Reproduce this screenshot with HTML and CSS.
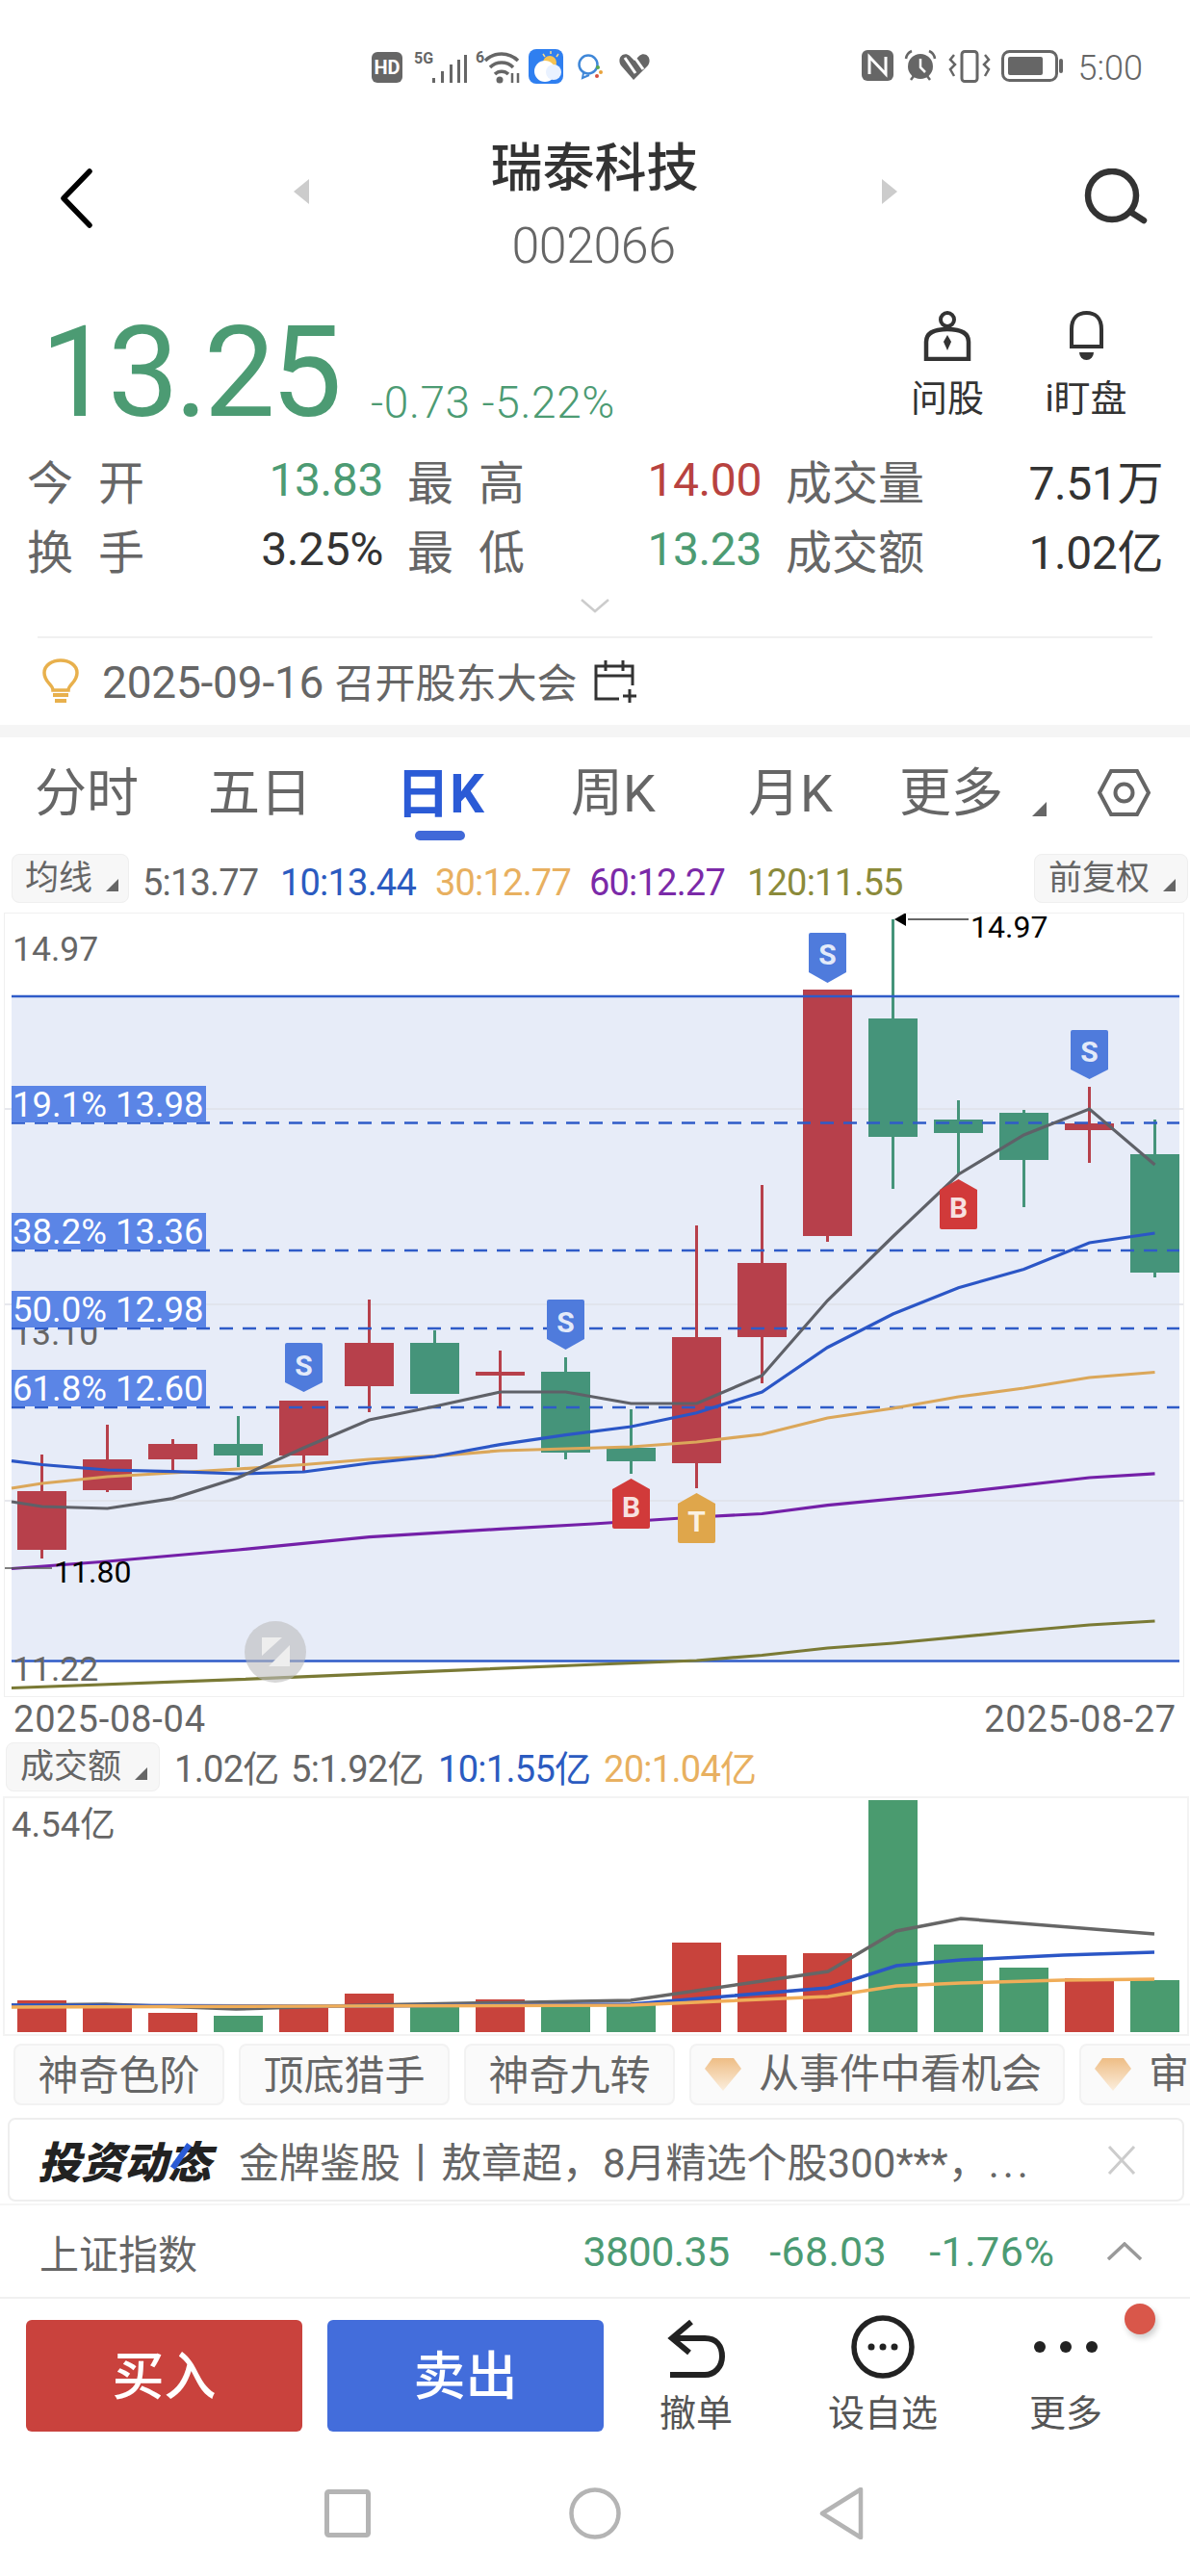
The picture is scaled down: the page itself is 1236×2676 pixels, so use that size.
FILE: index.html
```html
<!DOCTYPE html>
<html>
<head>
    <title>瑞泰科技</title>
    <link rel="stylesheet" href="styles.css">
</head>
<body>
    <!-- status bar -->
    <div class="status">
        <svg width="290" height="38" viewBox="386 51 290 38">
            <rect x="386" y="54" width="32" height="32" rx="6" fill="#666"/>
            <text x="402" y="77" class="st-hd">HD</text>
            <text x="430" y="66" class="st-small">5G</text>
            <rect x="449" y="81" width="3" height="5" fill="#666"/>
            <rect x="458" y="74" width="3" height="12" fill="#666"/>
            <rect x="467" y="67" width="3" height="19" fill="#666"/>
            <rect x="475" y="62" width="3" height="24" fill="#666"/>
            <rect x="482" y="57" width="3" height="29" fill="#666"/>
            <text x="494" y="65" class="st-small">6</text>
            <g fill="none" stroke="#666" stroke-width="3.5">
                <path d="M504 63 A24 24 0 0 1 538 63"/>
                <path d="M509 70 A17 17 0 0 1 533 70"/>
                <path d="M514 77 A10 10 0 0 1 528 77"/>
            </g>
            <circle cx="519" cy="83" r="3.5" fill="#666"/>
            <path d="M532 86 V76 M538 86 V76" stroke="#666" stroke-width="2.5"/>
            <rect x="549" y="51" width="36" height="36" rx="8" fill="#2f7ff0"/>
            <path d="M572 53 V56 M564 56 L566 59 M580 56 L578 59" stroke="#f6d98a" stroke-width="1.5"/>
            <circle cx="571" cy="65" r="7" fill="#f6c453"/>
            <circle cx="566" cy="74" r="11" fill="#fff"/>
            <circle cx="575" cy="75" r="8" fill="#eaf2ff"/>
            <circle cx="611" cy="67" r="9.5" fill="none" stroke="#3f87d8" stroke-width="2.5"/>
            <path d="M606 76 L605 81 L612 78" fill="none" stroke="#3f87d8" stroke-width="2"/>
            <circle cx="621" cy="70" r="2" fill="#5aa84e"/>
            <circle cx="624" cy="75" r="2" fill="#e8a23c"/>
            <circle cx="620" cy="79" r="2" fill="#d6503f"/>
            <path d="M658 83 L645 68 C640 60 648 53 654 58 L659 63 L664 58 C670 53 678 60 673 68 Z" fill="#666"/>
            <path d="M649 60 L660 76 M658 58 L668 72" stroke="#fff" stroke-width="3"/>
        </svg>
        <div class="status-right">
            <svg width="210" height="36" viewBox="896 52 210 36">
                <rect x="896" y="53" width="33" height="32" rx="6" fill="#666"/>
                <path d="M904 78 V60 L921 78 V60" fill="none" stroke="#fff" stroke-width="3"/>
                <circle cx="957" cy="70" r="13" fill="#666"/>
                <path d="M957 62 V71 L962 76" fill="none" stroke="#fff" stroke-width="2.5"/>
                <path d="M942 62 A10 10 0 0 1 948 54 M972 62 A10 10 0 0 0 966 54 M947 84 L950 80 M967 84 L964 80" fill="none" stroke="#666" stroke-width="2.5"/>
                <rect x="1000" y="54.5" width="16" height="31" rx="3" fill="none" stroke="#666" stroke-width="3"/>
                <path d="M992 58 L988 63 L993 68 L988 73 L992 80 M1024 58 L1028 63 L1023 68 L1028 73 L1024 80" fill="none" stroke="#666" stroke-width="2.5"/>
                <rect x="1042.5" y="54.5" width="56" height="30" rx="7" fill="none" stroke="#666" stroke-width="3"/>
                <rect x="1048" y="60" width="36" height="19" rx="2" fill="#666"/>
                <rect x="1101" y="62" width="4" height="15" rx="2" fill="#666"/>
            </svg>
            <span class="status-time">5:00</span>
        </div>
    </div>

    <!-- title bar -->
    <div class="titlebar">
        <svg class="back" width="34" height="62" viewBox="0 0 34 62">
            <path d="M31 3 L4 31 L31 59" fill="none" stroke="#000" stroke-width="5.5" stroke-linecap="round" stroke-linejoin="round"/>
        </svg>
        <svg class="arrow-l" width="16" height="26" viewBox="0 0 16 26"><path d="M16 0 V26 L0 13 Z" fill="#ccc"/></svg>
        <div class="stock-name">
            <p class="name">瑞泰科技</p>
            <p class="code">002066</p>
        </div>
        <svg class="arrow-r" width="16" height="26" viewBox="0 0 16 26"><path d="M0 0 V26 L16 13 Z" fill="#ccc"/></svg>
        <svg class="search" width="66" height="58" viewBox="0 0 66 58">
            <circle cx="29" cy="28" r="25" fill="none" stroke="#333" stroke-width="6.5"/>
            <path d="M48 45 L62 54" stroke="#333" stroke-width="6.5" stroke-linecap="round"/>
        </svg>
    </div>

    <!-- current price -->
    <div class="quote">
        <span class="price">13.25</span>
        <span class="change">-0.73 -5.22%</span>
        <div class="quick one">
            <svg width="50" height="52" viewBox="0 0 50 52">
                <circle cx="25" cy="9" r="7" fill="none" stroke="#333" stroke-width="4"/>
                <path d="M3 50 V32 C3 22 12 19 25 19 C38 19 47 22 47 32 V50 Z" fill="none" stroke="#333" stroke-width="4.5"/>
                <path d="M25 25 L29 32 L25 41 L21 32 Z" fill="#333"/>
            </svg>
            <span>问股</span>
        </div>
        <div class="quick two">
            <svg width="39" height="52" viewBox="0 0 39 52">
                <path d="M4 37 V19 C4 7 11 2 19.5 2 C28 2 35 7 35 19 V37 Z" fill="none" stroke="#333" stroke-width="4"/>
                <path d="M12 43 H27 A7.5 8 0 0 1 12 43 Z" fill="#333"/>
            </svg>
            <span>i盯盘</span>
        </div>
    </div>

    <!-- open, high, low and so on -->
    <div class="stats">
        <div class="lbl"><span>今</span><span>开</span></div><div class="val green">13.83</div>
        <div class="lbl mid"><span>最</span><span>高</span></div><div class="val red">14.00</div>
        <div class="lbl mid"><span>成交量</span></div><div class="val">7.51万</div>
        <div class="lbl"><span>换</span><span>手</span></div><div class="val">3.25%</div>
        <div class="lbl mid"><span>最</span><span>低</span></div><div class="val green">13.23</div>
        <div class="lbl mid"><span>成交额</span></div><div class="val">1.02亿</div>
    </div>
    <div class="expand">
        <svg width="30" height="15" viewBox="0 0 30 15"><path d="M1 1 L15 13 L29 1" fill="none" stroke="#ccc" stroke-width="2.5"/></svg>
    </div>
    <div class="rule"></div>

    <!-- event notice -->
    <div class="event">
        <svg width="40" height="48" viewBox="0 0 40 48">
            <path d="M12 33 C12 27 3 25 3 15 C3 7 11 2 20 2 C29 2 37 7 37 15 C37 25 28 27 28 33 Z" fill="none" stroke="#e8b04c" stroke-width="3.5"/>
            <path d="M12 38 H28 M14 44 H26" stroke="#e8b04c" stroke-width="4"/>
        </svg>
        <span class="event-text">2025-09-16 <span class="event-cn">召开股东大会</span></span>
        <svg class="event-cal" width="46" height="44" viewBox="0 0 46 44">
            <path d="M26 40 H2 V6 H40 V26 M2 16 H40 M12 0 V11 M30 0 V11 M37 30 V44 M30 37 H44" fill="none" stroke="#333" stroke-width="3"/>
        </svg>
    </div>
    <div class="band"></div>

    <!-- period tabs -->
    <div class="tabs">
        <div class="tab">分时</div>
        <div class="tab">五日</div>
        <div class="tab active">日K<div class="tab-line"></div></div>
        <div class="tab">周K</div>
        <div class="tab">月K</div>
        <div class="tab">更多</div>
        <div class="tab-tools">
            <svg width="15" height="15" viewBox="0 0 15 15"><path d="M15 0 V15 H0 Z" fill="#666"/></svg>
            <svg width="55" height="49" viewBox="0 0 55 49">
                <path d="M14 2 H41 L53 24.5 L41 47 H14 L2 24.5 Z" fill="none" stroke="#666" stroke-width="4"/>
                <circle cx="27.5" cy="24.5" r="9" fill="none" stroke="#666" stroke-width="4"/>
            </svg>
        </div>
    </div>

    <!-- moving average legend -->
    <div class="legend">
        <div class="pick ma-pick">均线<i class="tri"></i></div>
        <span class="ma5">5:13.77</span>
        <span class="ma10">10:13.44</span>
        <span class="ma30">30:12.77</span>
        <span class="ma60">60:12.27</span>
        <span class="ma120">120:11.55</span>
        <div class="pick adj-pick">前复权<i class="tri"></i></div>
    </div>

    <!-- k line chart, drawn in page coordinates -->
    <div class="kchart">
        <svg width="1224" height="813" viewBox="5 949 1224 813">
            <rect x="12" y="1035" width="1213" height="690" fill="#e7ecf8"/>
            <path d="M5 1152 H1229 M5 1355 H1229 M5 1559 H1229" stroke="#dfe1e8" stroke-width="1.5"/>
            <text x="13" y="998" class="axis">14.97</text>
            <text x="13" y="1397" class="axis">13.10</text>

            <g class="up">
                <rect x="18" y="1549" width="51" height="61"/><rect x="42" y="1511" width="3" height="108"/>
                <rect x="86" y="1516" width="51" height="32"/><rect x="110" y="1480" width="3" height="70"/>
                <rect x="154" y="1500" width="51" height="16"/><rect x="178" y="1495" width="3" height="33"/>
                <rect x="290" y="1455" width="51" height="57"/><rect x="314" y="1455" width="3" height="73"/>
                <rect x="358" y="1395" width="51" height="45"/><rect x="382" y="1350" width="3" height="117"/>
                <rect x="494" y="1425" width="51" height="4"/><rect x="518" y="1403" width="3" height="58"/>
                <rect x="698" y="1389" width="51" height="131"/><rect x="722" y="1273" width="3" height="273"/>
                <rect x="766" y="1312" width="51" height="77"/><rect x="790" y="1231" width="3" height="206"/>
                <rect x="834" y="1028" width="51" height="256"/><rect x="858" y="1028" width="3" height="262"/>
                <rect x="1106" y="1167" width="51" height="7"/><rect x="1130" y="1129" width="3" height="79"/>
            </g>
            <g class="down">
                <rect x="222" y="1500" width="51" height="12"/><rect x="246" y="1471" width="3" height="53"/>
                <rect x="426" y="1395" width="51" height="53"/><rect x="450" y="1382" width="3" height="66"/>
                <rect x="562" y="1425" width="51" height="84"/><rect x="586" y="1410" width="3" height="106"/>
                <rect x="630" y="1504" width="51" height="14"/><rect x="654" y="1464" width="3" height="67"/>
                <rect x="902" y="1058" width="51" height="123"/><rect x="926" y="955" width="3" height="280"/>
                <rect x="970" y="1163" width="51" height="14"/><rect x="994" y="1143" width="3" height="77"/>
                <rect x="1038" y="1156" width="51" height="49"/><rect x="1062" y="1153" width="3" height="101"/>
                <rect x="1174" y="1199" width="51" height="123"/><rect x="1198" y="1163" width="3" height="164"/>
            </g>

            <path d="M12 1035 H1225 M12 1725.5 H1225" stroke="#2f5bc8" stroke-width="2.5"/>
            <path class="dash" d="M12 1166.5 H1225 M12 1299 H1225 M12 1380 H1225 M12 1462 H1225"/>

            <g fill="none" stroke-width="3.2">
                <polyline stroke="#7a7a35" points="12,1753.5 247.5,1744.7 620,1729 723.5,1725 791.5,1719.5 859.5,1712 927.5,1707 1063.5,1694 1131.5,1688 1199.5,1684"/>
                <polyline stroke="#7420a8" points="12,1629.5 111.5,1622 247.5,1610 383.5,1596.6 519.5,1588.4 616,1583 723.5,1576 791.5,1572.5 859.5,1563.7 995.5,1550.5 1131.5,1535 1199.5,1530.8"/>
                <polyline stroke="#dba75a" points="12,1546 43.5,1541 111.5,1534 179.5,1530 247.5,1526 315.5,1521.5 383.5,1516 451.5,1512.7 519.5,1507 587.5,1505 655.5,1503 723.5,1498 791.5,1490 859.5,1473 927.5,1463 995.5,1451 1063.5,1442 1131.5,1431 1199.5,1425.5"/>
                <polyline stroke="#2b56c6" points="12,1517.6 43.5,1521.5 111.5,1527 179.5,1528.6 247.5,1531 315.5,1529 383.5,1520 451.5,1513 519.5,1500.6 587.5,1490.7 655.5,1482 723.5,1467.7 791.5,1446 859.5,1399.7 927.5,1365 995.5,1337.7 1063.5,1318.5 1131.5,1291 1199.5,1281"/>
                <polyline stroke="#5f6168" points="12,1560 43.5,1565 111.5,1567 179.5,1556.6 247.5,1535 315.5,1504 383.5,1475 451.5,1461 519.5,1446 587.5,1446 655.5,1458 723.5,1458 791.5,1429 859.5,1351 927.5,1284.5 995.5,1220 1063.5,1179 1131.5,1152 1199.5,1210"/>
            </g>

            <g class="fib">
                <rect x="12" y="1128" width="202" height="38"/><text x="13" y="1160">19.1% 13.98</text>
                <rect x="12" y="1260" width="202" height="38"/><text x="13" y="1292">38.2% 13.36</text>
                <rect x="12" y="1341" width="202" height="38"/><text x="13" y="1373">50.0% 12.98</text>
                <rect x="12" y="1423" width="202" height="38"/><text x="13" y="1455">61.8% 12.60</text>
            </g>

            <g class="mark-s">
                <path d="M298 1395 H333 Q335 1395 335 1397 V1436 L315.5 1446 L296 1436 V1397 Q296 1395 298 1395 Z"/><text x="315.5" y="1429">S</text>
                <path d="M570 1350 H605 Q607 1350 607 1352 V1391 L587.5 1402 L568 1391 V1352 Q568 1350 570 1350 Z"/><text x="587.5" y="1384">S</text>
                <path d="M842 969 H877 Q879 969 879 971 V1010 L859.5 1021 L840 1010 V971 Q840 969 842 969 Z"/><text x="859.5" y="1002">S</text>
                <path d="M1114 1070 H1149 Q1151 1070 1151 1072 V1111 L1131.5 1121 L1112 1111 V1072 Q1112 1070 1114 1070 Z"/><text x="1131.5" y="1103">S</text>
            </g>
            <g class="mark-b">
                <path d="M638 1588 H673 Q675 1588 675 1586 V1547 L655.5 1536 L636 1547 V1586 Q636 1588 638 1588 Z"/><text x="655.5" y="1576">B</text>
                <path d="M978 1277 H1013 Q1015 1277 1015 1275 V1236 L995.5 1225 L976 1236 V1275 Q976 1277 978 1277 Z"/><text x="995.5" y="1265">B</text>
            </g>
            <g class="mark-t">
                <path d="M706 1603 H741 Q743 1603 743 1601 V1562 L723.5 1551 L704 1562 V1601 Q704 1603 706 1603 Z"/><text x="723.5" y="1591">T</text>
            </g>

            <path d="M943 955 H1006" stroke="#333" stroke-width="1.5"/>
            <path d="M929 955 L941 948 V962 Z" fill="#000"/>
            <text x="1008" y="974" class="peak">14.97</text>
            <path d="M5 1629 H54" stroke="#555" stroke-width="1.5"/>
            <text x="56" y="1644" class="peak">11.80</text>
            <text x="13" y="1746" class="axis">11.22</text>

            <circle cx="286" cy="1716" r="32" fill="#bdbdbd" fill-opacity="0.6"/>
            <path d="M272 1701 H293 L272 1720 Z M301 1709 V1731 H279 Z" fill="#eee"/>
        </svg>
    </div>
    <div class="dates"><span>2025-08-04</span><span>2025-08-27</span></div>

    <!-- volume -->
    <div class="vol-legend">
        <div class="pick vol-pick">成交额<i class="tri"></i></div>
        <span class="v1">1.02亿</span>
        <span class="v5">5:1.92亿</span>
        <span class="v10">10:1.55亿</span>
        <span class="v20">20:1.04亿</span>
    </div>
    <div class="volchart">
        <svg width="1228" height="245" viewBox="5 1868 1228 245">
            <g class="vup">
                <rect x="18" y="2078" width="51" height="33"/>
                <rect x="86" y="2083" width="51" height="28"/>
                <rect x="154" y="2091" width="51" height="20"/>
                <rect x="290" y="2085" width="51" height="26"/>
                <rect x="358" y="2071" width="51" height="40"/>
                <rect x="494" y="2077" width="51" height="34"/>
                <rect x="698" y="2018" width="51" height="93"/>
                <rect x="766" y="2031" width="51" height="80"/>
                <rect x="834" y="2029" width="51" height="82"/>
                <rect x="1106" y="2055" width="51" height="56"/>
            </g>
            <g class="vdown">
                <rect x="222" y="2094" width="51" height="17"/>
                <rect x="426" y="2085" width="51" height="26"/>
                <rect x="562" y="2083" width="51" height="28"/>
                <rect x="630" y="2083" width="51" height="28"/>
                <rect x="902" y="1870" width="51" height="241"/>
                <rect x="970" y="2020" width="51" height="91"/>
                <rect x="1038" y="2044" width="51" height="67"/>
                <rect x="1174" y="2057" width="51" height="54"/>
            </g>
            <g fill="none" stroke-width="3.5">
                <polyline stroke="#666" points="12,2083 110,2082 245,2087 378,2083 655,2078 860,2048 931,2006 998,1993 1199,2009"/>
                <polyline stroke="#2b56c6" points="12,2083 378,2084 655,2082 860,2065 931,2042 998,2036 1104,2031 1199,2028"/>
                <polyline stroke="#f0ad58" points="12,2085 655,2083 860,2074 931,2063 998,2060 1104,2057 1199,2056"/>
            </g>
            <text x="12" y="1908" class="vol-max">4.54亿</text>
        </svg>
    </div>

    <!-- tool chips -->
    <div class="chips">
        <div class="chip">神奇色阶</div>
        <div class="chip">顶底猎手</div>
        <div class="chip">神奇九转</div>
        <div class="chip chip-wide">
            <svg width="38" height="34" viewBox="0 0 38 34"><defs><linearGradient id="gem" x1="0" y1="0" x2="0" y2="1"><stop offset="0" stop-color="#eebd85"/><stop offset="1" stop-color="#fbeedd"/></linearGradient></defs><path d="M8 0 H30 L38 11 L19 34 L0 11 Z" fill="url(#gem)"/></svg>
            从事件中看机会
        </div>
        <div class="chip chip-wide">
            <svg width="38" height="34" viewBox="0 0 38 34"><path d="M8 0 H30 L38 11 L19 34 L0 11 Z" fill="url(#gem)"/></svg>
            审时度势
        </div>
    </div>

    <!-- news -->
    <div class="news">
        <span class="news-logo">投资动态</span>
        <span class="news-text">金牌鉴股丨敖章超，8月精选个股300***，<span class="news-more">...</span></span>
        <svg width="30" height="30" viewBox="0 0 30 30"><path d="M2 1 L28 29 M28 1 L2 29" stroke="#ccc" stroke-width="3"/></svg>
    </div>

    <!-- index -->
    <div class="index">
        <span class="index-name">上证指数</span>
        <span class="index-val">3800.35</span>
        <span class="index-chg">-68.03</span>
        <span class="index-pct">-1.76%</span>
        <svg width="38" height="19" viewBox="0 0 38 19"><path d="M2 18 L19 2 L36 18" fill="none" stroke="#999" stroke-width="3.5"/></svg>
    </div>

    <!-- bottom actions -->
    <div class="actions">
        <a class="btn buy" href="#">买入</a>
        <a class="btn sell" href="#">卖出</a>
        <div class="act act-undo">
            <svg width="62" height="62" viewBox="0 0 62 62">
                <path d="M26 3 L6 20 L24 35 M6 20 H40 C52 20 58 28 58 39 C58 50 50 58 40 58 H4" fill="none" stroke="#222" stroke-width="6"/>
            </svg>
            <span>撤单</span>
        </div>
        <div class="act act-watch">
            <svg width="66" height="66" viewBox="0 0 66 66">
                <circle cx="33" cy="33" r="30" fill="none" stroke="#222" stroke-width="5.5"/>
                <circle cx="21" cy="33" r="3.5" fill="#222"/><circle cx="33" cy="33" r="3.5" fill="#222"/><circle cx="45" cy="33" r="3.5" fill="#222"/>
            </svg>
            <span>设自选</span>
        </div>
        <div class="act act-more">
            <svg width="66" height="66" viewBox="0 0 66 66">
                <circle cx="6" cy="33" r="6" fill="#222"/><circle cx="33" cy="33" r="6" fill="#222"/><circle cx="60" cy="33" r="6" fill="#222"/>
            </svg>
            <span>更多</span>
            <i class="dot"></i>
        </div>
    </div>

    <!-- system nav -->
    <div class="nav">
        <svg width="48" height="50" viewBox="0 0 48 50"><rect x="2.5" y="2.5" width="43" height="45" rx="2" fill="none" stroke="#b4b4b4" stroke-width="5"/></svg>
        <svg width="54" height="54" viewBox="0 0 54 54"><circle cx="27" cy="27" r="24.5" fill="none" stroke="#b4b4b4" stroke-width="4.5"/></svg>
        <svg width="46" height="54" viewBox="0 0 46 54"><path d="M43 2 V52 L3 27 Z" fill="none" stroke="#b4b4b4" stroke-width="4.5" stroke-linejoin="round"/></svg>
    </div>
</body>
</html>
```

FILE: styles.css
```css
/* page */
body {
    margin: 0;
    width: 1236px;
    height: 2676px;
    overflow: hidden;
    background: #fff;
    color: #666;
    font-family: Roboto, "Noto Sans CJK SC", sans-serif;
}
p {
    margin: 0;
}
svg {
    display: block;
    flex: none;
}

/* status bar */
.status {
    height: 110px;
    box-sizing: border-box;
    padding: 51px 49px 0 386px;
    display: flex;
    justify-content: space-between;
}
.status-right {
    display: flex;
    align-items: flex-start;
}
.status-time {
    font-size: 36px;
    line-height: 36px;
    margin: 2px 0 0 15px;
    font-weight: 300;
}
.st-hd {
    fill: #fff;
    font-size: 20px;
    font-weight: 700;
    text-anchor: middle;
}
.st-small {
    fill: #666;
    font-size: 16px;
    font-weight: 700;
}

/* title bar */
.titlebar {
    height: 180px;
    display: flex;
    align-items: flex-start;
    padding-left: 62px;
}
.back {
    margin: 65px 209px 0 0;
}
.arrow-l,
.arrow-r {
    margin-top: 76px;
}
.stock-name {
    width: 595px;
    text-align: center;
    padding-top: 31px;
}
.name {
    font-size: 54px;
    line-height: 70px;
    color: #333;
    font-weight: 500;
    margin-right: 2px;
}
.code {
    font-size: 52px;
    line-height: 60px;
    margin: 15px 4px 0 0;
    font-weight: 300;
    letter-spacing: -0.5px;
}
.search {
    margin: 65px 0 0 194px;
}

/* price */
.quote {
    height: 174px;
    display: flex;
    align-items: flex-start;
    padding-left: 42px;
    color: #4c9b73;
}
.price {
    font-size: 132px;
    line-height: 126px;
    margin-top: 34px;
    letter-spacing: -4.5px;
    width: 343px;
}
.change {
    font-size: 46px;
    line-height: 42px;
    margin-top: 107px;
    width: 549px;
    letter-spacing: 0.6px;
    font-weight: 300;
}
.quick {
    display: flex;
    flex-direction: column;
    align-items: center;
    color: #333;
    font-size: 38px;
    line-height: 38px;
    margin-top: 33px;
    gap: 20px;
}
.quick.one {
    width: 100px;
}
.quick.two {
    width: 100px;
    margin-left: 44px;
}

/* stats grid */
.stats {
    height: 144px;
    margin-top: -2px;
    box-sizing: border-box;
    padding-left: 28px;
    display: grid;
    grid-template-columns: 122px 248px 147px 246px 171px 246px;
    grid-auto-rows: 72px;
    align-items: center;
    font-size: 48px;
}
.lbl {
    display: flex;
    justify-content: space-between;
    font-size: 48px;
}
.lbl.mid {
    margin-left: 25px;
    white-space: nowrap;
}
.val {
    text-align: right;
    color: #333;
    letter-spacing: -0.4px;
}
.val.green {
    color: #4c9b73;
}
.val.red {
    color: #b8423f;
}
.expand {
    height: 55px;
    box-sizing: border-box;
    padding-top: 16px;
    display: flex;
    justify-content: center;
}
.rule {
    height: 2px;
    margin: 0 39px;
    background: #f0f0f0;
}

/* event notice */
.event {
    height: 90px;
    box-sizing: border-box;
    padding-left: 43px;
    display: flex;
    align-items: center;
}
.event-text {
    font-size: 46px;
    margin: -4px 0 0 23px;
    letter-spacing: -0.2px;
}
.event-cn {
    font-size: 42px;
    letter-spacing: 0;
}
.event-cal {
    margin-left: 18px;
}
.band {
    height: 13px;
    background: #f5f5f5;
}

/* period tabs */
.tabs {
    height: 114px;
    box-sizing: border-box;
    padding-top: 29px;
    display: grid;
    grid-template-columns: 180px 180px 194px 166px 202px 132px 182px;
    align-items: start;
}
.tab {
    font-size: 54px;
    line-height: 60px;
    text-align: center;
}
.tab.active {
    color: #2b5bd6;
    font-weight: 700;
    font-size: 56px;
}
.tab-line {
    width: 52px;
    height: 10px;
    border-radius: 5px;
    margin: 8px auto 0;
    background: #4169d8;
}
.tab-tools {
    display: flex;
    align-items: flex-end;
    padding-left: 18px;
    gap: 53px;
    margin-top: 4px;
}

/* legends */
.legend {
    height: 62px;
    box-sizing: border-box;
    padding: 7px 2px 0 12px;
    display: flex;
    align-items: flex-start;
    font-size: 38px;
    line-height: 61px;
    letter-spacing: -0.8px;
}
.pick {
    height: 51px;
    box-sizing: border-box;
    border: 1px solid #efefef;
    border-radius: 8px;
    background: #f7f7f7;
    display: flex;
    align-items: center;
    font-size: 35px;
    letter-spacing: 0;
    flex: none;
}
.tri {
    width: 0;
    height: 0;
    border-left: 13px solid transparent;
    border-bottom: 13px solid #666;
    margin: 14px 0 0 14px;
}
.ma-pick {
    width: 122px;
    padding-left: 13px;
    margin-right: 14px;
}
.adj-pick {
    width: 160px;
    padding-left: 14px;
    margin-left: auto;
}
.ma5 {
    color: #666;
    width: 143px;
}
.ma10 {
    color: #2b5bc0;
    width: 161px;
}
.ma30 {
    color: #e8b060;
    width: 160px;
}
.ma60 {
    color: #7b2aa8;
    width: 164px;
}
.ma120 {
    color: #8b8a3a;
}

/* k line chart */
.kchart {
    height: 813px;
    margin: 7px 0 0 5px;
    width: 1224px;
    box-shadow: 0 0 0 1px #f0f0f0;
}
.axis {
    font-size: 35.5px;
    fill: #666;
}
.peak {
    font-size: 32px;
    fill: #000;
}
.up {
    fill: #b7404b;
}
.down {
    fill: #45947a;
}
.dash {
    stroke: #2f5bc8;
    stroke-width: 2.5;
    stroke-dasharray: 14 10;
    fill: none;
}
.fib rect {
    fill: #5b85e6;
}
.fib text {
    fill: #fff;
    font-size: 36.5px;
}
.mark-s path {
    fill: #4f7bdc;
}
.mark-b path {
    fill: #d13a3a;
}
.mark-t path {
    fill: #dfa64b;
}
.mark-s text,
.mark-b text,
.mark-t text {
    fill: #fff;
    fill-opacity: 0.85;
    font-size: 30px;
    font-weight: 700;
    text-anchor: middle;
}
.dates {
    height: 48px;
    display: flex;
    justify-content: space-between;
    padding: 0 14px;
    font-size: 38px;
    line-height: 48px;
    letter-spacing: 0.8px;
}

/* volume */
.vol-legend {
    height: 58px;
    box-sizing: border-box;
    padding-left: 6px;
    display: flex;
    align-items: flex-start;
    font-size: 38px;
    line-height: 57px;
    letter-spacing: -0.7px;
}
.vol-pick {
    width: 160px;
    padding-left: 14px;
    margin-right: 15px;
}
.v1 {
    width: 121px;
}
.v5 {
    width: 153px;
}
.v10 {
    width: 172px;
    color: #2b5bc0;
}
.v20 {
    color: #e8b060;
}
.volchart {
    height: 245px;
    width: 1228px;
    margin-left: 5px;
    box-shadow: 0 0 0 2px #f3f3f3;
}
.vup {
    fill: #c8433c;
}
.vdown {
    fill: #4a9b6f;
}
.vol-max {
    font-size: 36.5px;
    fill: #666;
}

/* chips */
.chips {
    height: 64px;
    margin: 10px 0 0 14px;
    display: flex;
    gap: 15px;
    overflow: hidden;
}
.chip {
    width: 219px;
    flex: none;
    box-sizing: border-box;
    border: 2px solid #f2f2f2;
    border-radius: 8px;
    background: #fafafa;
    font-size: 42px;
    line-height: 64px;
    text-align: center;
}
.chip-wide {
    width: 390px;
    display: flex;
    align-items: center;
    padding-left: 14px;
    gap: 18px;
}

/* news */
.news {
    height: 87px;
    box-sizing: border-box;
    margin: 13px 6px 0 8px;
    padding: 0 48px 0 29px;
    border: 2px solid #eee;
    border-radius: 8px;
    display: flex;
    align-items: center;
    font-size: 42px;
}
.news-logo {
    width: 182px;
    margin-right: 27px;
    font-size: 45px;
    font-weight: 900;
    font-style: italic;
    color: #222;
    flex: none;
    position: relative;
}
.news-logo::after {
    content: "";
    position: absolute;
    left: 146px;
    top: 14px;
    width: 6px;
    height: 30px;
    background: #2b5bd6;
    transform: rotate(35deg);
}
.news-text {
    flex: 1;
    white-space: nowrap;
}
.news-more {
    letter-spacing: 4px;
}

/* index row */
.index {
    height: 99px;
    margin-top: 2px;
    box-sizing: border-box;
    padding: 0 49px 0 41px;
    border-top: 2px solid #f5f5f5;
    border-bottom: 2px solid #f0f0f0;
    display: flex;
    align-items: center;
    font-size: 43px;
}
.index-name {
    width: 565px;
    font-size: 41px;
}
.index-val,
.index-chg,
.index-pct {
    color: #4c9b73;
}
.index-val {
    width: 194px;
    letter-spacing: -0.6px;
}
.index-chg {
    width: 166px;
    letter-spacing: 0.3px;
}
.index-pct {
    width: 184px;
    letter-spacing: 0.5px;
}

/* bottom actions */
.actions {
    height: 193px;
    display: flex;
    align-items: flex-start;
    padding: 22px 0 0 27px;
    box-sizing: border-box;
}
.btn {
    display: block;
    width: 287px;
    height: 116px;
    border-radius: 6px;
    color: #fff;
    text-decoration: none;
    text-align: center;
    font-size: 54px;
    line-height: 119px;
    font-weight: 500;
}
.buy {
    background: #c9423d;
    margin-right: 26px;
}
.sell {
    background: #436ddb;
}
.act {
    position: relative;
    width: 114px;
    display: flex;
    flex-direction: column;
    align-items: center;
    font-size: 38px;
    line-height: 40px;
    color: #555;
}
.act span {
    margin-top: 16px;
}
.act-undo {
    margin-left: 39px;
}
.act-undo svg {
    margin-top: -1px;
}
.act-watch {
    margin-left: 80px;
}
.act-watch svg,
.act-more svg {
    margin-top: -5px;
}
.act-more {
    margin-left: 83px;
    width: 100px;
}
.dot {
    position: absolute;
    left: 111px;
    top: -17px;
    width: 32px;
    height: 32px;
    border-radius: 50%;
    background: #d9574a;
    box-shadow: 2px 4px 6px rgba(0, 0, 0, 0.2);
}

/* system nav */
.nav {
    height: 60px;
    display: flex;
    align-items: center;
    padding: 0 339px 0 337px;
    justify-content: space-between;
}
```
